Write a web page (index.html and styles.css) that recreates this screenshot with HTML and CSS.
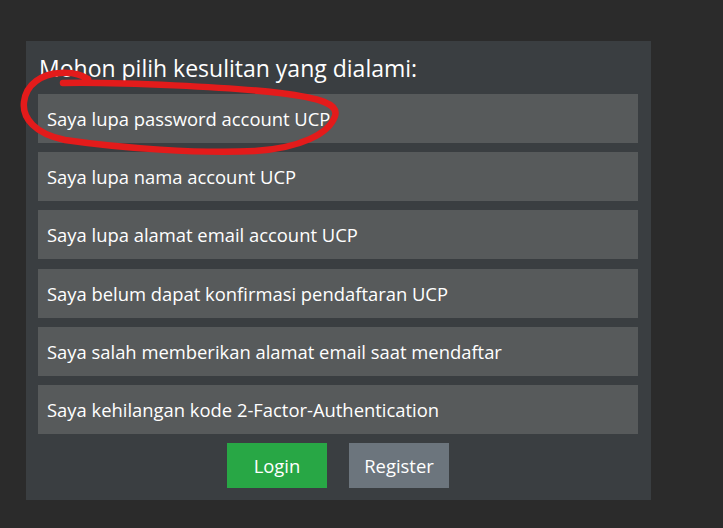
FILE: index.html
```html
<!DOCTYPE html>
<html>
<head>
<meta charset="utf-8">
<link rel="stylesheet" href="styles.css">
</head>
<body>
<div class="panel">
  <h2 class="title">Mohon pilih kesulitan yang dialami:</h2>
  <ul class="options">
    <li class="option">Saya lupa password account UCP</li>
    <li class="option">Saya lupa nama account UCP</li>
    <li class="option">Saya lupa alamat email account UCP</li>
    <li class="option">Saya belum dapat konfirmasi pendaftaran UCP</li>
    <li class="option">Saya salah memberikan alamat email saat mendaftar</li>
    <li class="option">Saya kehilangan kode 2-Factor-Authentication</li>
  </ul>
  <div class="actions">
    <button class="btn btn-login">Login</button>
    <button class="btn btn-register">Register</button>
  </div>
</div>
<svg class="scribble" width="723" height="528" viewBox="0 0 723 528">
  <path d="M 63 83 C 120 82, 230 87, 280 93 C 320 98, 339 104, 335 116 C 329 134, 300 148, 255 151 C 200 154, 120 148, 65 140 C 35 134, 22 118, 24 102 C 26 84, 42 74, 60 73 C 72 72, 82 75, 88 79" fill="none" stroke="#e31b1b" stroke-width="6.5" stroke-linecap="round" stroke-linejoin="round"/>
</svg>
</body>
</html>
```

FILE: styles.css
```css
html, body {
  margin: 0;
  padding: 0;
}
body {
  background: #2b2b2b;
  width: 723px;
  height: 528px;
  overflow: hidden;
  position: relative;
  font-family: "Open Sans", "Noto Sans", sans-serif;
  color: #ffffff;
  padding-top: 41px;
  padding-left: 26px;
  box-sizing: border-box;
}
.panel {
  width: 625px;
  background: #3a3e41;
  padding: 12px 13px 12px 12px;
  box-sizing: border-box;
}
.title {
  margin: 0 0 11px 1px;
  font-size: 23px;
  font-weight: 400;
  line-height: 30px;
  color: #ffffff;
}
.options {
  list-style: none;
  margin: 0;
  padding: 0;
  display: flex;
  flex-direction: column;
  gap: 9.2px;
}
.option {
  height: 49px;
  line-height: 49px;
  background: #575a5b;
  padding-left: 9px;
  font-size: 18.4px;
  color: #ffffff;
}
.actions {
  display: flex;
  justify-content: center;
  gap: 22px;
  margin-top: 9.5px;
}
.btn {
  width: 100px;
  height: 45px;
  border: none;
  border-radius: 0;
  font-family: "Open Sans", "Noto Sans", sans-serif;
  font-size: 18.4px;
  color: #ffffff;
  padding: 0;
}
.btn-login {
  background: #28a745;
}
.btn-register {
  background: #6c757d;
}
.scribble {
  position: absolute;
  top: 0;
  left: 0;
  pointer-events: none;
}
```
